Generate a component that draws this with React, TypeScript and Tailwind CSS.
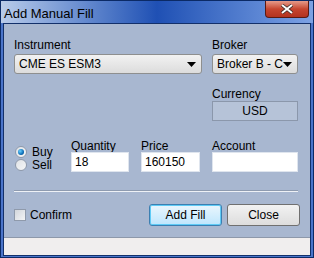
import React from "react";

const font = { fontFamily: "Tahoma, 'Liberation Sans', Arial, sans-serif" };

function Arrow() {
  return (
    <svg width="9" height="5" viewBox="0 0 9 5" className="shrink-0">
      <path d="M0 0h9L4.5 5z" fill="#000" />
    </svg>
  );
}

function Select({ value, className }: { value: string; className: string }) {
  return (
    <div
      className={`flex h-[20px] items-center rounded-[3px] border border-[#8e8f8f] bg-gradient-to-b from-[#f2f2f2] to-[#dcdcdc] pl-[4px] pr-[5px] ${className}`}
    >
      <span className="flex-1 overflow-hidden whitespace-nowrap text-[12px] text-black">{value}</span>
      <Arrow />
    </div>
  );
}

function Field({ value, className }: { value: string; className: string }) {
  return (
    <div
      className={`flex h-[20px] items-center border border-[#dfe5ee] bg-white px-[3px] text-[12px] text-black ${className}`}
    >
      {value}
    </div>
  );
}

function Radio({ checked, label }: { checked?: boolean; label: string }) {
  return (
    <div className="flex h-[13px] items-center gap-[5px]">
      <div className="flex h-[12px] w-[12px] items-center justify-center rounded-full border border-[#8f9aab] bg-gradient-to-br from-[#dfe2e6] to-[#f6f7f8]">
        {checked && (
          <div className="h-[6px] w-[6px] rounded-full bg-[radial-gradient(circle_at_35%_35%,#6ad0ff,#0d6fb8_60%,#0a3f7a)]" />
        )}
      </div>
      <span className="text-[12px] text-black">{label}</span>
    </div>
  );
}

export default function App() {
  return (
    <div style={font} className="flex h-[258px] w-[314px] flex-col border border-[#0b2a66] bg-[#4a74c9]">
      {/* title bar */}
      <div className="flex h-[22px] items-start bg-gradient-to-r from-[#b9cbe9] via-[#1f50b4] to-[#7da2e4] pl-[3px]">
        <span className="pt-[3px] text-[13px] text-black">Add Manual Fill</span>
        <div className="flex-1" />
        <div className="mr-[4px] flex h-[17px] w-[44px] items-center justify-center rounded-b-[4px] border border-t-0 border-[#5a1a12] bg-gradient-to-b from-[#e59a8a] via-[#c6452f] to-[#b3321f]">
          <svg width="12" height="10" viewBox="0 0 12 10">
            <path d="M1 1l10 8M11 1L1 9" stroke="#3b2a28" strokeWidth="3.4" />
            <path d="M1 1l10 8M11 1L1 9" stroke="#fff" strokeWidth="2" />
          </svg>
        </div>
      </div>

      {/* client */}
      <div className="mx-[2px] mb-[3px] flex flex-1 flex-col border border-[#13306a] bg-[#a8b7d0]">
        <div className="flex flex-1 flex-col pl-[10px] pr-[10px]">
          <div className="mt-[12px] flex gap-[10px]">
            <div className="flex flex-col">
              <span className="h-[18px] text-[12px] text-black">Instrument</span>
              <Select value="CME ES ESM3" className="w-[188px]" />
            </div>
            <div className="flex flex-col">
              <span className="h-[18px] text-[12px] text-black">Broker</span>
              <Select value="Broker B - CME" className="w-[86px]" />
              <span className="mt-[11px] h-[16px] text-[12px] text-black">Currency</span>
              <div className="flex h-[20px] w-[86px] items-center justify-center border border-[#8b97ab] bg-[#b6c3d8] text-[12px] text-black">
                USD
              </div>
            </div>
          </div>

          <div className="mt-[16px] flex items-end">
            <div className="mb-[1px] flex w-[57px] flex-col pl-[1px]">
              <Radio checked label="Buy" />
              <Radio label="Sell" />
            </div>
            <div className="flex flex-col">
              <span className="h-[15px] text-[12px] text-black">Quantity</span>
              <Field value="18" className="w-[58px]" />
            </div>
            <div className="ml-[12px] flex flex-col">
              <span className="h-[15px] text-[12px] text-black">Price</span>
              <Field value="160150" className="w-[59px]" />
            </div>
            <div className="ml-[12px] flex flex-col">
              <span className="h-[15px] text-[12px] text-black">Account</span>
              <Field value="" className="w-[86px]" />
            </div>
          </div>

          <div className="mt-[18px] mr-[2px] h-[2px] border-t border-b border-t-[#8e9bb0] border-b-[#eef1f6]" />

          <div className="mt-[12px] flex items-center">
            <div className="flex items-center gap-[4px]">
              <div className="h-[12px] w-[12px] border border-[#8f9aab] bg-gradient-to-br from-[#d2d6dc] to-[#f3f4f6]" />
              <span className="text-[12px] text-black">Confirm</span>
            </div>
            <div className="flex-1" />
            <button className="flex h-[22px] w-[73px] items-center justify-center rounded-[3px] border border-[#3c7fb1] bg-gradient-to-b from-[#eaf6fd] to-[#bee6fd] text-[12px] text-black shadow-[inset_0_0_0_1px_#5ecbf6]">
              Add Fill
            </button>
            <button className="ml-[5px] flex h-[22px] w-[73px] items-center justify-center rounded-[3px] border border-[#707070] bg-gradient-to-b from-[#f2f2f2] to-[#dddddd] text-[12px] text-black">
              Close
            </button>
          </div>
        </div>
        <div className="mt-[11px] h-[18px] border-t border-[#8d98aa] bg-[#f0eeee]" />
      </div>
    </div>
  );
}
